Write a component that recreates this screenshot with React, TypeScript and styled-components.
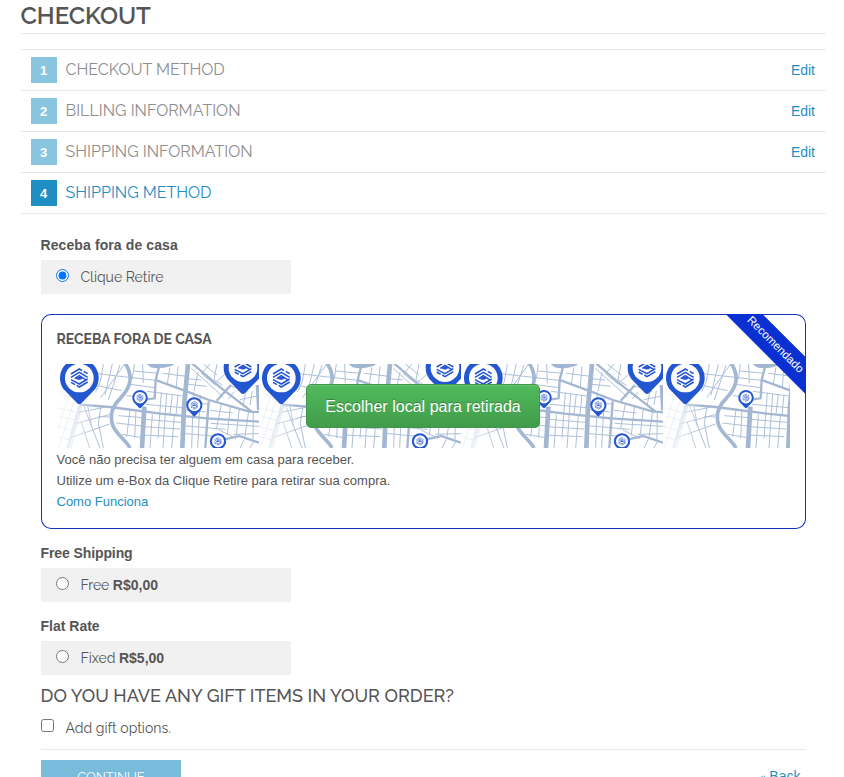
import React from "react";
import styled, { createGlobalStyle } from "styled-components";

const GlobalStyle = createGlobalStyle`
  *, *::before, *::after { box-sizing: border-box; }
  html, body { margin: 0; padding: 0; background: #fff; }
  body { overflow: hidden; }
  h1, h2, h3, p, ol { margin: 0; padding: 0; font-weight: inherit; }
`;

const sans = `"Liberation Sans", Arial, Helvetica, sans-serif`;
const display = `Raleway, Lato, sans-serif`;

const Page = styled.main`
  width: 844px;
  height: 777px;
  overflow: hidden;
  padding: 0 18px 0 21px;
  color: #555;
  font: 14px/21px ${sans};
`;

const Title = styled.h1`
  height: 34px;
  border-bottom: 1px solid #e8e8e8;
  font: 600 24px/32px ${display};
  letter-spacing: -0.05px;
  text-indent: -0.5px;
  margin-bottom: 15px;
`;

const Steps = styled.ol`
  list-style: none;
  border-top: 1px solid #e8e8e8;
`;

const Step = styled.li`
  display: flex;
  align-items: center;
  height: 41px;
  padding: 0 11px 0 10px;
  border-bottom: 1px solid #e8e8e8;
`;

const StepNumber = styled.span<{ $active?: boolean }>`
  width: 26px;
  height: 26px;
  padding-right: 1px;
  background: ${(p) => (p.$active ? "#1f8ec3" : "#8ac5df")};
  color: #fff;
  font-weight: 600;
  font-size: 13px;
  line-height: 27px;
  text-align: center;
`;

const StepName = styled.h2<{ $active?: boolean }>`
  flex: 1;
  margin-left: 8.5px;
  color: ${(p) => (p.$active ? "#1f8ec3" : "#8e8e8e")};
  font: 400 16px/24px ${display};
`;

const Link = styled.a`
  color: #1f8ec3;
  text-decoration: none;
`;

const Content = styled.section`
  margin: 21px 20px 0;
`;

const Carrier = styled.h3<{ $track?: number }>`
  height: 25px;
  font: 700 14px/21px ${sans};
  letter-spacing: ${(p) => p.$track ?? 0}px;
  text-indent: -0.5px;
`;

const Option = styled.label<{ $gap: number }>`
  display: flex;
  align-items: center;
  width: 250px;
  height: 34px;
  padding: 0 15px;
  background: #f1f1f1;
  margin-bottom: ${(p) => p.$gap}px;
  font: 400 14px/20px ${display};
`;

const Radio = styled.input.attrs({ type: "radio", name: "shipping" })`
  width: 13px;
  height: 13px;
  margin: 0 11.5px 3px 0;
`;

const Price = styled.b`
  margin-left: 3.5px;
  font: 700 14px/20px ${sans};
`;

const Card = styled.section`
  position: relative;
  overflow: hidden;
  height: 215px;
  padding: 15px 16px;
  border-radius: 10px;
  box-shadow: inset 0 0 0 1px #0f35ba;
  margin-bottom: 14px;
  font-size: 13px;
`;

const CardTitle = styled.h3`
  height: 35px;
  font: 700 14px/21px ${display};
  letter-spacing: -0.03px;
  text-indent: -0.5px;
`;

const Ribbon = styled.span`
  position: absolute;
  top: 16.5px;
  right: -37.5px;
  width: 140px;
  height: 26px;
  padding-left: 3px;
  transform: rotate(45deg);
  background: #0a30d2;
  color: #fff;
  font-size: 11.5px;
  line-height: 25px;
  text-align: center;
`;

const MapBanner = styled.div`
  display: grid;
  place-items: center;
  width: 733px;
  height: 84px;
  > * { grid-area: 1 / 1; }
`;

const MapSvg = styled.svg`
  display: block;
`;

const PickButton = styled.button`
  width: 234px;
  height: 44px;
  padding: 1px 0 0;
  margin: 0 1px 0 0;
  border: 1px solid #3f9849;
  border-radius: 5px;
  background: linear-gradient(#51bb5d, #419b4a);
  box-shadow: inset 0 1px 0 rgba(255, 255, 255, 0.12);
  color: #fff;
  font: 16px/41px ${sans};
  letter-spacing: 0.03px;
  text-shadow: 0 -1px 0 rgba(0, 0, 0, 0.25);
`;

const Line = styled.p`
  line-height: 21px;
`;

const Copy = styled.div`
  padding-top: 1px;
  text-indent: -0.5px;
`;

const GiftTitle = styled.h2`
  height: 33px;
  font: 500 18px/22px ${display};
  text-indent: -0.5px;
`;

const GiftOption = styled.label`
  display: flex;
  align-items: center;
  height: 20px;
  font: 400 14px/20px ${display};
`;

const Check = styled.input.attrs({ type: "checkbox" })`
  width: 13px;
  height: 13px;
  margin: 0 11.5px 5px 0;
`;

const Footer = styled.footer`
  display: flex;
  justify-content: space-between;
  margin-top: 11px;
  padding: 10px 5.5px 0 0;
  border-top: 1px solid #e8e8e8;
`;

const Continue = styled.button`
  width: 140px;
  height: 33px;
  border: 0;
  padding: 0;
  background: #78bbdb;
  color: #fff;
  font: 400 13px/33px ${display};
`;

const Back = styled(Link)`
  line-height: 32px;
  small { font-size: 10px; }
`;

const HexMark = () => (
  <g fill="none" stroke="#2454d3" strokeWidth="4.6">
    <path d="M-25,-12 L0,-27 L8,-22 M13,-20 L25,-13 M-25,-2 L0,-17 L25,-2 M25,12 L0,27 L-8,22 M-13,20 L-25,13 M-25,5 L0,18 L25,3 M-14,2 L0,-7 L22,7" />
    <path d="M-11,2 Q0,-9 10,0 Q3,10 -11,2" fill="#2454d3" stroke="none" />
  </g>
);

const Pin = ({ x, y, s }: { x: number; y: number; s: number }) => (
  <g transform={`translate(${x} ${y}) scale(${s})`}>
    <path d="M-47,34 A58,58 0 1 1 47,34 L7,75 Q0,83 -7,75 Z" fill="#2357d2" />
    <circle r="43" fill="#fff" />
    <HexMark />
  </g>
);

const MapTile = () => (
  <g transform="scale(.33333) translate(-21 -27)">
    <rect x="21" y="27" width="606" height="252" fill="#fff" />
    <g fill="none" stroke="#a3b7d3">
      <g strokeWidth="3" stroke="#adbfd8">
        <path d="M132,55 L325,77 M143,92 L215,107 M160,27 L151,80 L137,110 M187,27 L165,120 M210,30 L175,135 M152,128 L224,27 M253,27 L247,72 M278,27 L280,84 M252,48 L325,55 M240,88 L314,98 M230,122 L250,124" />
        <path d="M291,109 L398,123 M288,148 L398,158 M334,112 L324,250 M350,115 L339,280 M367,117 L360,178 M384,119 L378,180 M284,193 L393,202 M280,215 L390,222 M276,240 L385,245 M307,178 L300,279 M373,180 L365,280" />
        <path d="M205,182 L279,188 M199,204 L275,213 M240,164 L230,245 M258,165 L254,249 M215,238 L276,248" />
        <path d="M100,150 L150,279 M86,172 L163,157 M75,206 L181,178 M62,248 L179,207 M113,151 L125,216 M153,155 L145,205 L160,279 M93,199 L119,279 M145,184 L177,186" />
        <path d="M337,55 L410,64 M360,37 L352,85 M384,34 L379,96 M424,40 L520,126 M412,71 L454,75 M407,87 L470,94 M444,52 L432,109 M460,27 L501,60 M480,27 L455,56 L496,90 M501,27 L492,74 L517,91 M524,58 L501,79 M541,93 L595,109 M553,110 L535,132 M590,100 L580,147 M607,108 L600,150 M570,134 L627,122" />
        <path d="M401,142 L473,147 M430,112 L425,278 M451,120 L443,278 M399,212 L527,223 M397,235 L520,246 M400,164 L467,171 M482,205 L627,214 M514,147 L499,224 M541,154 L532,241 M568,161 L559,238 M596,169 L585,245 M610,171 L609,253 M480,166 L548,174 M550,238 L627,236 M505,224 L558,250 M583,253 L570,279 M611,260 L600,279" />
      </g>
      <g strokeWidth="7">
        <path d="M90,149 L180,156 L332,176 L471,190 L627,200" />
        <path d="M225,24 C253,67 240,98 211,130 C183,157 178,183 189,213 C201,240 231,260 240,279" strokeWidth="11" />
        <path d="M328,32 L317,75 L314,130 L290,133 M320,76 L402,106 L477,135 L598,170 L627,171 M425,24 L508,95 L605,170 M500,137 L543,90 M476,139 L466,279 M520,254 L567,243 L627,263" />
        <path d="M283,155 L276,279 M414,27 L402,155 L397,279" strokeWidth="14" />
        <path d="M623,90 L627,165" strokeWidth="12" />
      </g>
      <g strokeWidth="3" opacity=".55">
        <path d="M32,115 L83,135 M21,158 L75,171 M28,184 L73,195 M21,214 L67,226 M21,244 L61,256 M56,122 L25,220 M72,138 L25,279 M98,145 L62,279" />
        <path d="M90,149 L53,279" strokeWidth="9" />
      </g>
    </g>
    <path d="M290,27 H370 V31 Q330,45 302,37 Z" fill="#a0b5d2" />
    <rect x="21" y="27" width="115" height="252" fill="url(#fade)" />
    <Pin x={88} y={69} s={1} />
    <Pin x={579} y={38} s={1} />
    <Pin x={270} y={128} s={0.4} />
    <Pin x={433} y={151} s={0.42} />
    <Pin x={504} y={259} s={0.42} />
  </g>
);

const StreetMap = () => (
  <MapSvg width="733" height="84" viewBox="0 0 733 84">
    <defs>
      <linearGradient id="fade">
        <stop offset="0" stopColor="#fff" stopOpacity=".72" />
        <stop offset=".5" stopColor="#fff" stopOpacity=".5" />
        <stop offset="1" stopColor="#fff" stopOpacity="0" />
      </linearGradient>
      <pattern id="streets" width="202" height="84" patternUnits="userSpaceOnUse">
        <MapTile />
      </pattern>
    </defs>
    <rect width="733" height="84" fill="url(#streets)" />
  </MapSvg>
);

const steps = [
  { name: "CHECKOUT METHOD" },
  { name: "BILLING INFORMATION" },
  { name: "SHIPPING INFORMATION" },
  { name: "SHIPPING METHOD", active: true },
];

export default function App() {
  return (
    <>
      <GlobalStyle />
      <Page>
        <Title>CHECKOUT</Title>
        <Steps>
          {steps.map((s, i) => (
            <Step key={s.name}>
              <StepNumber $active={s.active}>{i + 1}</StepNumber>
              <StepName $active={s.active}>{s.name}</StepName>
              {!s.active && <Link>Edit</Link>}
            </Step>
          ))}
        </Steps>
        <Content>
          <Carrier $track={0.1}>Receba fora de casa</Carrier>
          <Option $gap={20}>
            <Radio defaultChecked />
            <span>Clique Retire</span>
          </Option>
          <Card>
            <CardTitle>RECEBA FORA DE CASA</CardTitle>
            <MapBanner>
              <StreetMap />
              <PickButton>Escolher local para retirada</PickButton>
            </MapBanner>
            <Copy>
              <Line>Você não precisa ter alguem em casa para receber.</Line>
              <Line>Utilize um e-Box da Clique Retire para retirar sua compra.</Line>
              <Line><Link>Como Funciona</Link></Line>
            </Copy>
            <Ribbon>Recomendado</Ribbon>
          </Card>
          <Carrier $track={-0.1}>Free Shipping</Carrier>
          <Option $gap={14}>
            <Radio />
            <span>Free</span>
            <Price>R$0,00</Price>
          </Option>
          <Carrier>Flat Rate</Carrier>
          <Option $gap={10}>
            <Radio />
            <span>Fixed</span>
            <Price>R$5,00</Price>
          </Option>
          <GiftTitle>DO YOU HAVE ANY GIFT ITEMS IN YOUR ORDER?</GiftTitle>
          <GiftOption>
            <Check />
            <span>Add gift options.</span>
          </GiftOption>
          <Footer>
            <Continue>CONTINUE</Continue>
            <Back><small>«</small> Back</Back>
          </Footer>
        </Content>
      </Page>
    </>
  );
}
